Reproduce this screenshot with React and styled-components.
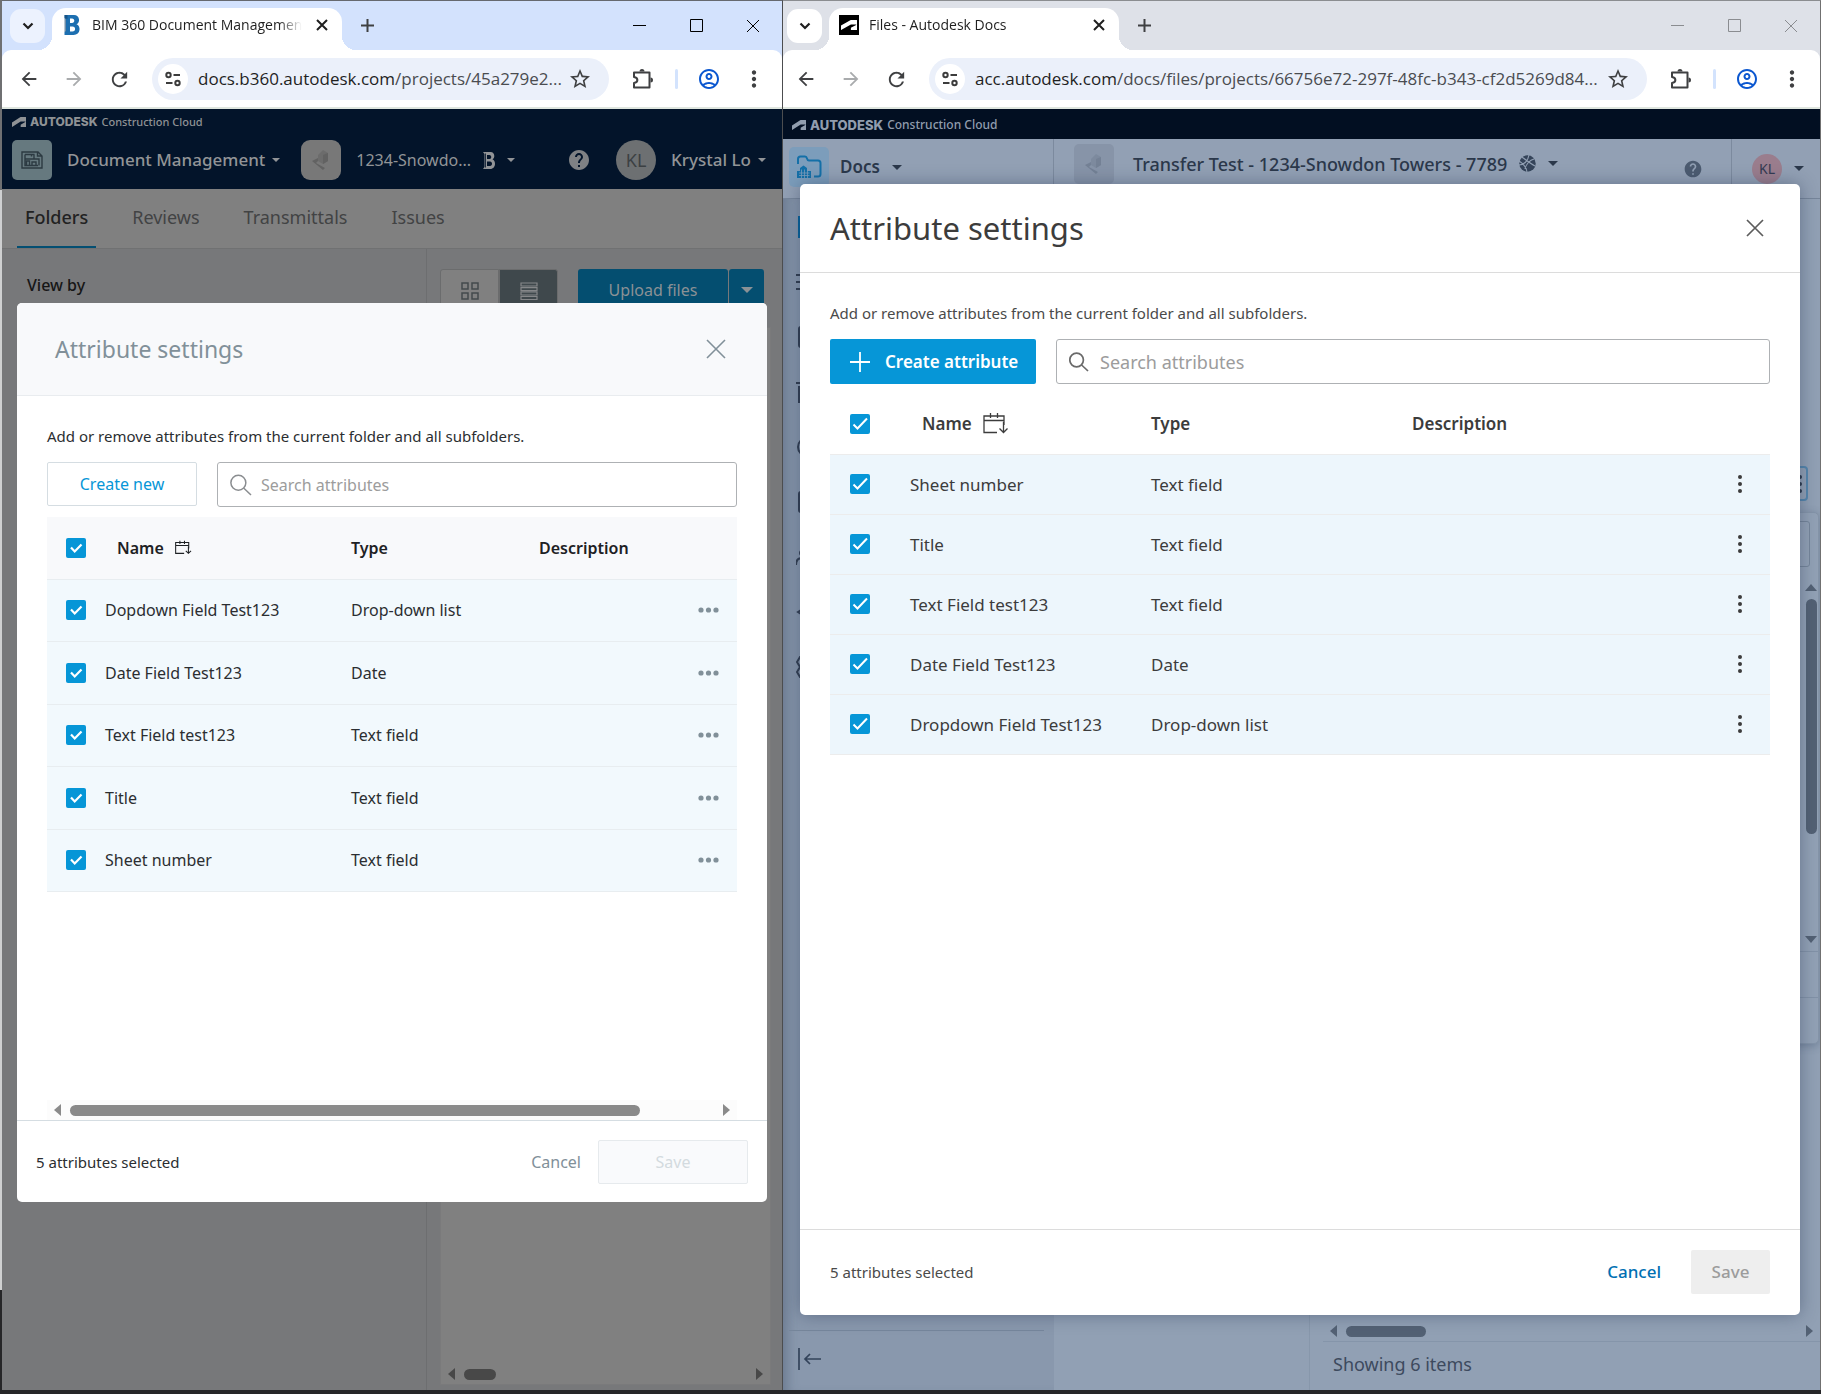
import React from "react";
import styled, { createGlobalStyle, css } from "styled-components";
import {
  MdArrowBack,
  MdArrowForward,
  MdRefresh,
  MdStarBorder,
  MdOutlineAccountCircle,
  MdMoreVert,
  MdHelp,
} from "react-icons/md";

const uiFont = '"Noto Sans", "Open Sans", sans-serif';
const chromeFont = '"Open Sans", "Noto Sans", sans-serif';

const GlobalStyle = createGlobalStyle`
  *, *::before, *::after { box-sizing: border-box; }
  body { margin: 0; font-family: ${uiFont}; font-size: 16px; color: #3c3c3c; }
  button, input { font: inherit; color: inherit; }
  button { border: 0; padding: 0; background: none; cursor: pointer; }
  a { color: inherit; text-decoration: none; }
  svg { display: block; flex: none; }
  h2, p { margin: 0; }
`;

const Desktop = styled.div`
  display: grid;
  grid-template-columns: 781fr 1038fr;
  min-height: 100vh;
  padding: 0 0 4px 2px;
  background: linear-gradient(#6f7072 0 190px, #cfd0d1 190px 1290px, #262628 1290px);
  background-color: #262628;
`;

const Window = styled.section`
  display: flex;
  flex-direction: column;
  min-width: 0;
  overflow: hidden;
  border-top: 1px solid ${(p) => (p.$active ? "#66696f" : "#8b8d90")};
  border-right: 1px solid ${(p) => (p.$active ? "#4c4d4f" : "#707070")};
  background: ${(p) => (p.$active ? "#d3e2fd" : "#dee1e8")};
`;

/* ---------- browser chrome ---------- */

const TabStrip = styled.div`
  display: flex;
  align-items: center;
  height: 49px;
  padding-left: ${(p) => (p.$active ? 8 : 4)}px;
  font-family: ${chromeFont};
  color: #1f1f1f;
`;

const TabSearch = styled.button`
  display: grid;
  place-items: center;
  width: 35px;
  height: 34px;
  border-radius: 11px;
  background: ${(p) => (p.$active ? "#ecf2fe" : "#ffffff")};
`;

const Tab = styled.div`
  position: relative;
  align-self: flex-end;
  display: flex;
  align-items: center;
  gap: 10px;
  width: 290px;
  height: 42px;
  margin-left: 7px;
  padding: 0 12px 8px 10px;
  border-radius: 14px 14px 0 0;
  background: #fff;
  &::before,
  &::after {
    content: "";
    position: absolute;
    bottom: 0;
    width: 14px;
    height: 14px;
  }
  &::before {
    right: 100%;
    background: radial-gradient(circle at 0 0, transparent 14px, #fff 14px);
  }
  &::after {
    left: 100%;
    background: radial-gradient(circle at 100% 0, transparent 14px, #fff 14px);
  }
`;

const TabTitle = styled.span`
  flex: 1;
  min-width: 0;
  overflow: hidden;
  white-space: nowrap;
  font-size: 14px;
  line-height: 20px;
  mask-image: linear-gradient(90deg, #000 88%, transparent 99%);
`;

const IconButton = styled.button`
  display: grid;
  place-items: center;
  flex: none;
  width: ${(p) => p.$w || 30}px;
  height: 30px;
  color: ${(p) => p.$color || "#3f4042"};
`;

const WindowControls = styled.div`
  display: flex;
  gap: 27px;
  margin-left: auto;
  padding-right: 14px;
`;

const Toolbar = styled.div`
  display: flex;
  align-items: center;
  height: 59px;
  padding: 1px 11px 0 ${(p) => (p.$active ? 12 : 8)}px;
  border-radius: 9px 9px 0 0;
  border-bottom: 2px solid #dfe6df;
  background: #fff;
`;

const NavButtons = styled.div`
  display: flex;
  gap: 15px;
  margin-right: 18px;
`;

const Omnibox = styled.div`
  display: flex;
  align-items: center;
  flex: 1;
  min-width: 0;
  height: 42px;
  padding: 0 14px 0 6px;
  border-radius: 21px;
  background: #ebf0fa;
`;

const SiteInfo = styled.button`
  display: grid;
  place-items: center;
  flex: none;
  width: 30px;
  height: 30px;
  border-radius: 50%;
  background: #fff;
`;

const Address = styled.div`
  flex: 1;
  min-width: 0;
  margin-left: 10px;
  white-space: nowrap;
  font: 17px/24px ${chromeFont};
  color: #4a4c50;
  b { font-weight: 400; color: #1f1f1f; }
`;

const ToolbarDivider = styled.span`
  width: 3px;
  height: 20px;
  margin-right: 16px;
  border-radius: 2px;
  background: #d3e3fd;
`;

const MenuDots = styled(IconButton)`
  margin-left: 13px;
`;

/* ---------- shared app parts ---------- */

const Page = styled.div`
  position: relative;
  display: flex;
  flex: 1;
  flex-direction: column;
  background: ${(p) => p.$bg};
`;

const Scrim = styled.div`
  position: absolute;
  inset: 0;
  display: flex;
  padding: ${(p) => p.$pad};
`;

const Dialog = styled.div`
  display: flex;
  flex: 1;
  flex-direction: column;
  min-width: 0;
  overflow: hidden;
  border-radius: 5px;
  background: #fff;
  box-shadow: ${(p) => p.$shadow};
`;

const Brand = styled.div`
  display: flex;
  align-items: center;
  gap: 4px;
  color: ${(p) => p.$color};
  font-size: ${(p) => p.$size}px;
  line-height: 18px;
  font-weight: 500;
  strong {
    font-family: Inter, sans-serif;
    font-size: ${(p) => p.$size + 1}px;
    font-weight: 800;
  }
`;

const Checkbox = styled.span`
  display: grid;
  width: 20px;
  height: 20px;
  > * { grid-area: 1 / 1; }
  input {
    appearance: none;
    width: 20px;
    height: 20px;
    margin: 0;
    border-radius: 2px;
    background: #0696d7;
  }
  svg { pointer-events: none; }
`;

const Table = styled.table`
  width: 100%;
  table-layout: fixed;
  border-collapse: collapse;
  text-align: left;
  th, td { padding: 0; }
  th { font-weight: 600; }
`;

const HeadLabel = styled.span`
  display: flex;
  align-items: center;
  gap: 11px;
  padding-left: 12px;
`;

const HScroll = styled.div`
  display: flex;
  align-items: center;
  gap: 9px;
  height: 20px;
  padding: 0 7px;
  color: ${(p) => p.$color};
  background: ${(p) => p.$bg || "transparent"};
  &::before, &::after {
    content: "";
    border: 6px solid transparent;
    border-width: 6px 0;
  }
  &::before { border-right: 7px solid currentColor; }
  &::after { border-left: 7px solid currentColor; margin-left: auto; }
`;

const HThumb = styled.span`
  width: ${(p) => p.$w};
  height: 11px;
  border-radius: 6px;
  background: currentColor;
`;

const Caret = styled.span`
  border: ${(p) => p.$size || 4}px solid transparent;
  border-top-color: currentColor;
  border-bottom: 0;
`;

const Spacer = styled.span`
  flex: ${(p) => (p.$w ? `0 0 ${p.$w}px` : 1)};
`;

/* ---------- left: document management ---------- */

const BimHeader = styled.header`
  height: 80px;
  padding: 4px 16px 0 10px;
  background: #03142a;
  color: #909396;
`;

const BimRow = styled.div`
  display: flex;
  align-items: center;
  height: 40px;
  margin-top: 9px;
  font-size: 16px;
`;

const Tile = styled.span`
  display: grid;
  place-items: center;
  flex: none;
  width: 40px;
  height: 40px;
  border-radius: ${(p) => p.$r || 5}px;
  background: ${(p) => p.$bg};
  color: #2c3a42;
`;

const MenuButton = styled.button`
  display: flex;
  align-items: center;
  gap: ${(p) => p.$gap || 7}px;
  margin-left: ${(p) => p.$ml || 15}px;
  color: ${(p) => p.$color || "#929497"};
  font-size: ${(p) => p.$size || 17}px;
  font-weight: ${(p) => p.$weight || 600};
  line-height: 26px;
  white-space: nowrap;
`;

const Avatar = styled.span`
  display: grid;
  place-items: center;
  width: ${(p) => p.$d}px;
  height: ${(p) => p.$d}px;
  border-radius: 50%;
  background: ${(p) => p.$bg};
  color: ${(p) => p.$color};
  font-size: ${(p) => p.$size}px;
`;

const BimTabs = styled.nav`
  display: flex;
  gap: 28px;
  height: 60px;
  padding-left: 15px;
  border-bottom: 1px solid #707172;
  background: #808080;
  font-size: 18px;
`;

const BimTab = styled.a`
  padding: 15px 8px 0;
  line-height: 26px;
  color: ${(p) => (p.$on ? "#222" : "#424344")};
  font-weight: ${(p) => (p.$on ? 500 : 400)};
  border-bottom: 2px solid ${(p) => (p.$on ? "#044f72" : "transparent")};
`;

const BimBody = styled.div`
  display: flex;
  flex: 1;
`;

const BimSide = styled.aside`
  flex: 0 0 425px;
  padding: 24px 25px;
  border-right: 1px solid #6d6e70;
  font-weight: 500;
  line-height: 24px;
  color: #161616;
`;

const BimMain = styled.div`
  display: flex;
  flex: 1;
  flex-direction: column;
  min-width: 0;
  padding: 20px 0 5px 13px;
`;

const BimActions = styled.div`
  display: flex;
  overflow: hidden;
  height: 44px;
  color: #8b8d8f;
`;

const Segment = styled.button`
  display: grid;
  place-items: center;
  width: 59px;
  border: 1px solid #6b6c6d;
  border-radius: ${(p) => (p.$on ? "0 3px 3px 0" : "3px 0 0 3px")};
  background: ${(p) => (p.$on ? "#3f484c" : "#808080")};
  color: ${(p) => (p.$on ? "#858789" : "#43494c")};
`;

const UploadButton = styled.button`
  display: grid;
  place-items: center;
  width: ${(p) => p.$w}px;
  margin-left: ${(p) => p.$ml}px;
  padding-bottom: 2px;
  border-radius: 3px;
  background: #044e70;
  color: #8b9195;
`;

const FilePane = styled.div`
  display: flex;
  flex: 1;
  flex-direction: column;
  justify-content: flex-end;
  margin: 14px 11px 0 0;
  border: 1px solid #7a7a7b;
  background: #808080;
`;

const BimDialogHead = styled.header`
  display: flex;
  align-items: center;
  justify-content: space-between;
  flex: none;
  height: 93px;
  padding: 0 36px 1px 38px;
  border-bottom: 1px solid #e9ecef;
  background: #f8f9fb;
  color: #819099;
  h2 { font-size: 23px; font-weight: 400; line-height: 30px; }
`;

const DialogBody = styled.div`
  display: flex;
  flex: 1;
  flex-direction: column;
  min-height: 0;
  padding: ${(p) => p.$pad};
`;

const Hint = styled.p`
  font-size: 15px;
  line-height: 20px;
  color: ${(p) => p.$color};
`;

const ControlRow = styled.div`
  display: flex;
  gap: 20px;
  height: 45px;
  margin-top: 16px;
`;

const CreateNew = styled.button`
  width: 150px;
  height: 44px;
  border: 1px solid #d5dde2;
  border-radius: 2px;
  color: #0696d7;
`;

const SearchField = styled.label`
  display: flex;
  align-items: center;
  gap: ${(p) => p.$gap}px;
  flex: 1;
  min-width: 0;
  padding: 0 12px;
  border: 1px solid #aeb1b4;
  border-radius: 3px;
  color: ${(p) => p.$color};
  font-size: ${(p) => p.$size}px;
  input {
    flex: 1;
    min-width: 0;
    padding: 0;
    border: 0;
    outline: 0;
    background: none;
    &::placeholder { color: #9c9c9c; opacity: 1; }
  }
`;

const BimTable = styled(Table)`
  height: 375px;
  margin-top: 10px;
  color: #2b2e31;
  th { color: #1e2124; }
  tr { border-bottom: 1px solid #e8edf0; }
  thead tr { height: 62px; background: #f8f9fb; }
  tbody tr { background: #f2f9fd; }
  th:first-child, td:first-child { padding-left: 19px; }
`;

const CellButton = styled.button`
  display: grid;
  place-items: center;
  width: 100%;
  height: 30px;
  color: ${(p) => p.$color};
`;

const BimFooter = styled.footer`
  display: flex;
  align-items: center;
  flex: none;
  height: 82px;
  padding: 0 19px;
  border-top: 1px solid #d5dde2;
  color: #2b2e31;
`;

const FootButton = styled.button`
  height: 44px;
  width: ${(p) => (p.$w ? p.$w + "px" : "auto")};
  margin-left: ${(p) => p.$ml || 0}px;
  border-radius: 2px;
  color: ${(p) => p.$color};
  font-weight: ${(p) => p.$weight || 400};
  background: ${(p) => p.$bg || "none"};
  ${(p) => p.$border && css`border: 1px solid ${p.$border};`}
`;

/* ---------- right: docs ---------- */

const DocsBrandBar = styled.header`
  display: flex;
  align-items: center;
  height: 30px;
  padding: 2px 0 0 9px;
  background: #020f22;
`;

const DocsBar = styled.div`
  display: flex;
  height: 60px;
  padding-left: 6px;
  border-bottom: 1px solid #76859a;
  background: #92a0b4;
  color: #2b384b;
`;

const DocsProduct = styled.div`
  display: flex;
  align-items: center;
  flex: 0 0 265px;
  padding-bottom: 3px;
  border-right: 1px solid #7c8a9e;
`;

const DocsProject = styled.div`
  display: flex;
  flex: 1;
  align-items: center;
  padding: 0 28px 10px 20px;
`;

const DocsHelp = styled(MdHelp)`
  margin-top: 10px;
`;

const DocsUser = styled.div`
  display: flex;
  align-items: center;
  gap: 12px;
  padding: 0 16px 0 20px;
  border-left: 1px solid #7c8a9e;
`;

const DocsBody = styled.div`
  display: flex;
  flex: 1;
`;

const DocsNav = styled.nav`
  display: flex;
  flex-direction: column;
  flex: 0 0 271px;
  padding: 0 10px 0 6px;
  background: #8998ad;
  box-shadow: inset 12px 0 12px -8px rgba(50, 65, 90, 0.35);
`;

const NavItem = styled.a`
  display: flex;
  align-items: center;
  height: 55px;
  padding-left: 7px;
  color: ${(p) => (p.$on ? "#06629b" : "#323e51")};
`;

const NavFoot = styled.div`
  display: flex;
  align-items: center;
  height: 60px;
  margin-top: auto;
  padding: 0 0 4px 9px;
  border-top: 1px solid #76869b;
  color: #33435a;
`;

const FolderPane = styled.div`
  flex: 0 0 256px;
  border-right: 1px solid #8797ab;
`;

const FilesPane = styled.div`
  position: relative;
  display: flex;
  flex: 1;
  flex-direction: column;
  justify-content: flex-end;
  padding-left: 13px;
`;

const DocsCount = styled.div`
  height: 49px;
  padding: 9px 0 0 10px;
  border-top: 1px solid #8595aa;
  color: #3d4a5e;
  font-size: 18px;
  line-height: 26px;
`;

const Popover = styled.div`
  position: absolute;
  top: 313px;
  right: 1px;
  display: flex;
  flex-direction: column;
  width: 300px;
  height: 532px;
  border: 1px solid #8494a8;
  border-radius: 5px;
  background: #92a1b5;
  box-shadow: 0 2px 8px rgba(40, 60, 90, 0.3);
`;

const PopoverInput = styled.input`
  height: 46px;
  margin: 8px 8px 17px 20px;
  border: 1px solid #76869a;
  border-radius: 3px;
  background: none;
`;

const VScroll = styled.div`
  display: flex;
  flex-direction: column;
  align-items: center;
  align-self: flex-end;
  gap: 8px;
  height: 360px;
  margin-right: 1px;
  color: #536174;
  &::before, &::after {
    content: "";
    border: 6px solid transparent;
    border-width: 0 6px;
  }
  &::before { border-bottom: 7px solid currentColor; }
  &::after { border-top: 7px solid currentColor; margin-top: auto; }
`;

const VThumb = styled.span`
  width: 11px;
  height: 235px;
  border-radius: 6px;
  background: currentColor;
`;

const PopoverRule = styled.span`
  height: 46px;
  margin-top: ${(p) => p.$mt}px;
  border-top: 1px solid #8292a7;
`;

const SettingsButton = styled.button`
  position: absolute;
  top: 267px;
  right: 12px;
  display: flex;
  align-items: center;
  justify-content: flex-end;
  width: 36px;
  height: 35px;
  padding-right: 3px;
  border: 2px solid #5586ac;
  border-radius: 4px;
  color: #2b384b;
`;

const DocsDialogHead = styled.header`
  display: flex;
  align-items: center;
  justify-content: space-between;
  flex: none;
  height: 89px;
  padding: 0 36px 1px 30px;
  border-bottom: 1px solid #dcdcdc;
  color: #3c3c3c;
  h2 { font-size: 31px; font-weight: 400; line-height: 40px; }
`;

const CreateAttribute = styled.button`
  display: flex;
  align-items: center;
  gap: 15px;
  width: 206px;
  padding: 0 20px;
  border-radius: 2px;
  background: #0696d7;
  color: #fff;
  font-size: 17px;
  font-weight: 600;
  white-space: nowrap;
`;

const DocsTable = styled(Table)`
  margin-top: 10px;
  color: #3c3c3c;
  font-size: 17px;
  tr { height: 60px; border-bottom: 1px solid #ececec; }
  tbody tr { background: #edf6fc; }
  th:first-child, td:first-child { padding-left: 20px; }
`;

const DocsFooter = styled.footer`
  display: flex;
  align-items: center;
  flex: none;
  height: 86px;
  padding: 0 30px 2px;
  border-top: 1px solid #dcdcdc;
  font-size: 17px;
`;

/* ---------- drawings ---------- */

const AutodeskMark = ({ w = 14, h = 10 }) => (
  <svg width={w} height={h} viewBox="0 3.8 24 16.4" preserveAspectRatio="none" fill="currentColor">
    <path d="m.129 20.202 14.7-9.136h7.625c.235 0 .445.188.445.445 0 .21-.092.305-.21.375l-7.222 4.323c-.47.283-.633.845-.633 1.265l-.008 2.725H24V4.362a.561.561 0 0 0-.585-.562h-8.752L0 12.893V20.2h.129z" />
  </svg>
);

const Stroke = ({ w, h = w, sw = 2, children }) => (
  <svg width={w} height={h} viewBox={`0 0 ${w} ${h}`} fill="none" stroke="currentColor" strokeWidth={sw}>
    {children}
  </svg>
);

const Tune = () => (
  <Stroke w={16}>
    <circle cx="3.5" cy="4" r="2.2" />
    <path d="M8.5 4H15M1 12h6.5" />
    <circle cx="12.5" cy="12" r="2.2" />
  </Stroke>
);

const Puzzle = () => (
  <Stroke w={22}>
    <path d="M3 4.5h15.500V19.500H3V15c4.500-.5 4.500-5.500 0-6z" strokeLinejoin="round" />
    <path d="M8.500 3.500a2.500 2.500 0 0 1 5 0zM19.500 9.500a2.500 2.500 0 0 1 0 5z" fill="currentColor" stroke="none" />
  </Stroke>
);

const BFavicon = () => (
  <svg width="20" height="20" viewBox="0 0 20 20">
    <path fill="#1d6fb0" fillRule="evenodd" d="M2.500 0H12c6 0 6.500 8 2.500 9.300C19 10.500 19 20 11.500 20H2.500V17l1.500-1V4L2.500 3zM8 3.500v4.500h2c3.200 0 3-4.500 0-4.500zM8 11.500v5h2.500c3.500 0 3.500-5 0-5z" />
    <path fill="#12426e" d="M2.500 0h3v4L4 3.500v13L2.500 17z" opacity=".6" />
  </svg>
);

const BlackFavicon = styled.span`
  display: grid;
  place-items: center;
  width: 20px;
  height: 20px;
  background: #000;
  color: #fff;
`;

const PlanIcon = () => (
  <Stroke w={22} h={18} sw={1.4}>
    <path d="M1 1h16l4 4v12H1zM4 3.500h9.500M4 3.500v11h13M4 8h9v-4.500M10.500 3.500v2M13 8h5v6.500M5.500 14.500V10h3v4.500M11 14.500V11h4v3.500M16.500 1.500V5H21" />
  </Stroke>
);

const HomePlaceholder = ({ a, b }) => (
  <svg width="20" height="22" viewBox="0 0 20 22">
    <path d="M7 6l5-5 5 3v8l-5 3-5-3z" fill={a} />
    <path d="M12 6l5-2v8l-5 3z" fill={b} />
    <path d="M1 12l6-3v3l-2 2 9 5-2 2z" fill={b} />
  </svg>
);

const BadgeB = () => (
  <svg width="14" height="17" viewBox="0 0 14 17">
    <path fill="currentColor" fillRule="evenodd" d="M1 0h7.500c4.500 0 4.800 6 2 7.300 3.800 1.400 3.500 9.700-2.500 9.700H1l1.500-2V2zM5 3v4h2.500c2.300 0 2.300-4 0-4zM5 9.500V14h3c2.700 0 2.700-4.500 0-4.500z" />
    <path d="M3.500 1.500v14" stroke="#03142a" strokeWidth=".8" />
  </svg>
);

const DocsFolder = () => (
  <svg width="26" height="24" viewBox="0 0 26 24" fill="none">
    <path d="M2 9V4q0-2.500 2.500-2.500H9q1.500 0 2 2t2 2h9q2.500 0 2.500 2.500v11q0 2.500-2.500 2.500h-4" stroke="#1470a8" strokeWidth="2" />
    <path d="M1 23V16h3v-3l3.500-2.500L11 13v3h4v7z" fill="#1470a8" />
    <path d="M3 18h10.500M3 20.500h10.500M5.500 14.500V23M8.500 14.500V23M11.500 16v7" stroke="#7c9dbb" strokeWidth=".8" />
  </svg>
);

const Globe = () => (
  <svg width="17" height="17" viewBox="0 0 17 17">
    <circle cx="8.5" cy="8.5" r="8.2" fill="#35445a" />
    <path d="M0 6c3 2 7 4 8 11M3 2c4 3 9 7 13 9M0 10C5 10 9 6 10 0M6 14c1-5 5-9 9-10" fill="none" stroke="#92a0b4" strokeWidth="1.1" />
  </svg>
);

const CalendarSort = ({ w, h, sw }) => (
  <svg width={w} height={h} viewBox="0 0 26 21" fill="none" stroke="currentColor" strokeWidth={sw}>
    <path d="M14 19.500H1V3h20v9M1 7.500h20M7.500 0v5M14.500 0v5M20.500 9v10.500M16.500 15.500l4 4 4-4" />
  </svg>
);

const SearchIcon = ({ size, sw = 1.5 }) => (
  <Stroke w={size} sw={sw}>
    <circle cx={size * 0.38} cy={size * 0.4} r={size * 0.34} />
    <path d={`M${size * 0.63} ${size * 0.65}L${size - 1} ${size - 1}`} />
  </Stroke>
);

const CloseIcon = ({ size, sw }) => (
  <Stroke w={size} sw={sw}>
    <path d={`M1 1L${size - 1} ${size - 1}M${size - 1} 1L1 ${size - 1}`} />
  </Stroke>
);

const Dots = ({ vertical }) => (
  <svg width={vertical ? 6 : 21} height={vertical ? 20 : 6} fill="currentColor">
    {[0, 1, 2].map((i) =>
      vertical ? <circle key={i} cx="3" cy={3 + i * 7} r="2" /> : <circle key={i} cx={3 + i * 7.5} cy="3" r="2.6" />
    )}
  </svg>
);

const Tick = ({ big }) => (
  <svg width="20" height="20" fill="none" stroke="#fff" strokeWidth={big ? 2 : 2.2}>
    <path d={big ? "M3.500 10.500l4 4L17 4.500" : "M5 9.500l3.700 4L15.500 6.500"} />
  </svg>
);

const Check = ({ label, big }) => (
  <Checkbox>
    <input type="checkbox" defaultChecked aria-label={label} />
    <Tick big={big} />
  </Checkbox>
);

const navIcons = [
  <path d="M3 1h20v20H3z" fill="currentColor" />,
  <path d="M0 4h22M0 11h22M0 18h22M5 2v18" />,
  <rect x="3" y="1" width="18" height="20" rx="2" />,
  <path d="M-1 2h22M3 6h18v15H3z" />,
  <circle cx="11" cy="11" r="9" />,
  <rect x="3" y="1" width="18" height="20" rx="2" />,
  <path d="M0 19q0-7 6-7t6 7M7 4a3 3 0 1 0 .1 0" />,
  <path d="M2 11l6-4v8zM10 11h11" />,
  <path d="M4 1l5 3h4l5-3 3 5-3 5 3 5-3 5-5-3H9l-5 3-3-5 3-5-3-5z" />,
];

/* ---------- composed parts ---------- */

const BrowserChrome = ({ active, favicon, title, host, path }) => {
  const control = active ? "#000" : "#8a8c90";
  return (
    <>
      <TabStrip $active={active}>
        <TabSearch $active={active} aria-label="Search tabs">
          <Stroke w={12} h={8} sw={2.2}><path d="M1.500 1.500L6 6l4.500-4.500" /></Stroke>
        </TabSearch>
        <Tab>
          {favicon}
          <TabTitle>{title}</TabTitle>
          <IconButton $w={16} $color="#1f1f1f" aria-label="Close tab"><CloseIcon size={12} sw={2} /></IconButton>
        </Tab>
        <IconButton $w={50} aria-label="New tab">
          <Stroke w={13}><path d="M6.500 0v13M0 6.500h13" /></Stroke>
        </IconButton>
        <WindowControls>
          <IconButton $color={control} aria-label="Minimize"><Stroke w={13} sw={1}><path d="M0 6.500h13" /></Stroke></IconButton>
          <IconButton $color={control} aria-label="Maximize"><Stroke w={13} sw={1}><path d="M.5.5h12v12H.5z" /></Stroke></IconButton>
          <IconButton $color={control} aria-label="Close"><CloseIcon size={14} sw={1} /></IconButton>
        </WindowControls>
      </TabStrip>
      <Toolbar $active={active}>
        <NavButtons>
          <IconButton aria-label="Back"><MdArrowBack size={22} /></IconButton>
          <IconButton $color="#a9abad" aria-label="Forward"><MdArrowForward size={22} /></IconButton>
          <IconButton aria-label="Reload"><MdRefresh size={23} /></IconButton>
        </NavButtons>
        <Omnibox>
          <SiteInfo aria-label="Site information"><Tune /></SiteInfo>
          <Address><b>{host}</b>{path}</Address>
          <IconButton aria-label="Bookmark"><MdStarBorder size={24} /></IconButton>
        </Omnibox>
        <IconButton $w={66} aria-label="Extensions"><Puzzle /></IconButton>
        <ToolbarDivider />
        <IconButton $color="#0b57d0" aria-label="Profile"><MdOutlineAccountCircle size={24} /></IconButton>
        <MenuDots $w={34} aria-label="Menu"><MdMoreVert size={26} /></MenuDots>
      </Toolbar>
    </>
  );
};

const bimRows = [
  ["Dopdown Field Test123", "Drop-down list"],
  ["Date Field Test123", "Date"],
  ["Text Field test123", "Text field"],
  ["Title", "Text field"],
  ["Sheet number", "Text field"],
];

const docsRows = [
  ["Sheet number", "Text field"],
  ["Title", "Text field"],
  ["Text Field test123", "Text field"],
  ["Date Field Test123", "Date"],
  ["Dropdown Field Test123", "Drop-down list"],
];

const AttributeTable = ({ as: Kind, rows, cols, icon, big, dots }) => (
  <Kind>
    <colgroup>
      {cols.map((w, i) => <col key={i} width={w || undefined} />)}
    </colgroup>
    <thead>
      <tr>
        <th><Check big={big} label="Select all attributes" /></th>
        <th><HeadLabel>Name {icon}</HeadLabel></th>
        <th>Type</th>
        <th>Description</th>
        <th aria-label="Actions" />
      </tr>
    </thead>
    <tbody>
      {rows.map(([name, type]) => (
        <tr key={name}>
          <td><Check big={big} label={name} /></td>
          <td>{name}</td>
          <td>{type}</td>
          <td />
          <td><CellButton $color={big ? "#3c3c3c" : "#819099"} aria-label={`More for ${name}`}>{dots}</CellButton></td>
        </tr>
      ))}
    </tbody>
  </Kind>
);

const BimWindow = () => (
  <Window $active>
    <BrowserChrome active favicon={<BFavicon />} title="BIM 360 Document Management" host="docs.b360.autodesk.com" path="/projects/45a279e2..." />
    <Page $bg="#77787a">
      <BimHeader>
        <Brand $color="#8f9295" $size={11}><AutodeskMark /><strong>AUTODESK</strong>Construction Cloud</Brand>
        <BimRow>
          <Tile $bg="#66797f"><PlanIcon /></Tile>
          <MenuButton $weight={500}>Document Management <Caret /></MenuButton>
          <Spacer $w={21} />
          <Tile $bg="#787878" $r={9}><HomePlaceholder a="#6c6c6c" b="#626262" /></Tile>
          <MenuButton $size={16} $weight={400} $gap={11}>1234-Snowdo... <BadgeB /> <Caret /></MenuButton>
          <Spacer />
          <MdHelp size={24} color="#7f8184" />
          <Spacer $w={25} />
          <Avatar $d={40} $bg="#6d7072" $color="#3c4043" $size={18}>KL</Avatar>
          <MenuButton $weight={500}>Krystal Lo <Caret /></MenuButton>
        </BimRow>
      </BimHeader>
      <BimTabs>
        <BimTab href="#folders" $on>Folders</BimTab>
        <BimTab href="#reviews">Reviews</BimTab>
        <BimTab href="#transmittals">Transmittals</BimTab>
        <BimTab href="#issues">Issues</BimTab>
      </BimTabs>
      <BimBody>
        <BimSide>View by</BimSide>
        <BimMain>
          <BimActions>
            <Segment aria-label="Grid view">
              <Stroke w={18} sw={1.5}><path d="M1 1h6v6H1zM11 1h6v6h-6zM1 11h6v6H1zM11 11h6v6h-6z" /></Stroke>
            </Segment>
            <Segment $on aria-label="List view">
              <Stroke w={18} sw={1.2}><path d="M1 1h16v3H1zM1 5.600h16v3H1zM1 10h16v3H1zM1 14.500h16v3H1z" /></Stroke>
            </Segment>
            <UploadButton $w={150} $ml={20}>Upload files</UploadButton>
            <UploadButton $w={35} $ml={1} aria-label="Upload options"><Caret $size={6} /></UploadButton>
          </BimActions>
          <FilePane>
            <HScroll $color="#484848"><HThumb $w="32px" /></HScroll>
          </FilePane>
        </BimMain>
      </BimBody>
      <Scrim $pad="194px 15px 188px">
        <Dialog role="dialog" aria-label="Attribute settings" $shadow="none">
          <BimDialogHead>
            <h2>Attribute settings</h2>
            <IconButton aria-label="Close dialog" $color="#819099"><CloseIcon size={20} sw={1.6} /></IconButton>
          </BimDialogHead>
          <DialogBody $pad="30px 30px 0">
            <Hint $color="#2b2e31">Add or remove attributes from the current folder and all subfolders.</Hint>
            <ControlRow>
              <CreateNew>Create new</CreateNew>
              <SearchField $gap={9} $size={16} $color="#8a8d90">
                <SearchIcon size={22} />
                <input placeholder="Search attributes" aria-label="Search attributes" />
              </SearchField>
            </ControlRow>
            <AttributeTable as={BimTable} rows={bimRows} cols={[58, 246, 188, 0, 58]} icon={<CalendarSort w={17} h={15} sw={1.6} />} dots={<Dots />} />
            <Spacer />
            <HScroll $color="#8a8a8a" $bg="#fcfcfc"><HThumb $w="570px" /></HScroll>
          </DialogBody>
          <BimFooter>
            <Hint $color="#2b2e31">5 attributes selected</Hint>
            <Spacer />
            <FootButton $color="#819099">Cancel</FootButton>
            <FootButton $w={150} $ml={17} $bg="#f9fafc" $border="#e6eaed" $color="#d3dadf">Save</FootButton>
          </BimFooter>
        </Dialog>
      </Scrim>
    </Page>
  </Window>
);

const DocsWindow = () => (
  <Window>
    <BrowserChrome favicon={<BlackFavicon><AutodeskMark w={16} h={10} /></BlackFavicon>} title="Files - Autodesk Docs" host="acc.autodesk.com" path="/docs/files/projects/66756e72-297f-48fc-b343-cf2d5269d84..." />
    <Page $bg="#91a0b4">
      <DocsBrandBar>
        <Brand $color="#919dae" $size={12}><AutodeskMark /><strong>AUTODESK</strong>Construction Cloud</Brand>
      </DocsBrandBar>
      <DocsBar>
        <DocsProduct>
          <Tile $bg="#7c9dbb"><DocsFolder /></Tile>
          <MenuButton $ml={11} $color="#2b384b" $gap={12}>Docs <Caret $size={5} /></MenuButton>
        </DocsProduct>
        <DocsProject>
          <Tile $bg="#8794a8"><HomePlaceholder a="#7d8a9e" b="#748195" /></Tile>
          <MenuButton $ml={19} $size={18} $weight={500} $color="#2b384b" $gap={12}>
            Transfer Test - 1234-Snowdon Towers - 7789 <Globe /> <Caret $size={5} />
          </MenuButton>
          <Spacer />
          <DocsHelp size={20} color="#4c5b70" />
        </DocsProject>
        <DocsUser>
          <Avatar $d={30} $bg="#9a7d8d" $color="#333a52" $size={14}>KL</Avatar>
          <Caret $size={5} />
        </DocsUser>
      </DocsBar>
      <DocsBody>
        <DocsNav>
          {navIcons.map((icon, i) => (
            <NavItem key={i} href={`#nav-${i}`} $on={i === 0} aria-label={`Section ${i + 1}`}>
              <Stroke w={22}>{icon}</Stroke>
            </NavItem>
          ))}
          <NavFoot>
            <Stroke w={24} h={22} sw={1.7}><path d="M1 0v22M7 11h16M12 6l-5 5 5 5" /></Stroke>
          </NavFoot>
        </DocsNav>
        <FolderPane />
        <FilesPane>
          <SettingsButton aria-label="Settings"><Dots vertical /></SettingsButton>
          <Popover>
            <PopoverInput aria-label="Filter columns" />
            <VScroll><VThumb /></VScroll>
            <PopoverRule $mt={8} />
            <PopoverRule $mt={0} />
          </Popover>
          <HScroll $color="#536174"><HThumb $w="80px" /></HScroll>
          <DocsCount>Showing 6 items</DocsCount>
        </FilesPane>
      </DocsBody>
      <Scrim $pad="75px 20px 75px 17px">
        <Dialog role="dialog" aria-label="Attribute settings" $shadow="0 0 18px rgba(30, 45, 75, 0.4)">
          <DocsDialogHead>
            <h2>Attribute settings</h2>
            <IconButton $w={18} aria-label="Close dialog" $color="#5c5c5c"><CloseIcon size={18} sw={1.7} /></IconButton>
          </DocsDialogHead>
          <DialogBody $pad="30px 30px 0">
            <Hint $color="#4a4a4a">Add or remove attributes from the current folder and all subfolders.</Hint>
            <ControlRow>
              <CreateAttribute>
                <Stroke w={20} sw={1.8}><path d="M10 0v20M0 10h20" /></Stroke>
                Create attribute
              </CreateAttribute>
              <SearchField $gap={11} $size={18} $color="#6a6a6a">
                <SearchIcon size={20} sw={1.7} />
                <input placeholder="Search attributes" aria-label="Search attributes" />
              </SearchField>
            </ControlRow>
            <AttributeTable as={DocsTable} big rows={docsRows} cols={[80, 241, 261, 0, 60]} icon={<CalendarSort w={26} h={21} sw={1.3} />} dots={<Dots vertical />} />
          </DialogBody>
          <DocsFooter>
            <Hint $color="#4a4a4a">5 attributes selected</Hint>
            <Spacer />
            <FootButton $color="#0070b3" $weight={500}>Cancel</FootButton>
            <FootButton $w={79} $ml={30} $bg="#eeeeee" $color="#9c9c9c" $weight={500}>Save</FootButton>
          </DocsFooter>
        </Dialog>
      </Scrim>
    </Page>
  </Window>
);

export default function App() {
  return (
    <>
      <GlobalStyle />
      <Desktop>
        <BimWindow />
        <DocsWindow />
      </Desktop>
    </>
  );
}
